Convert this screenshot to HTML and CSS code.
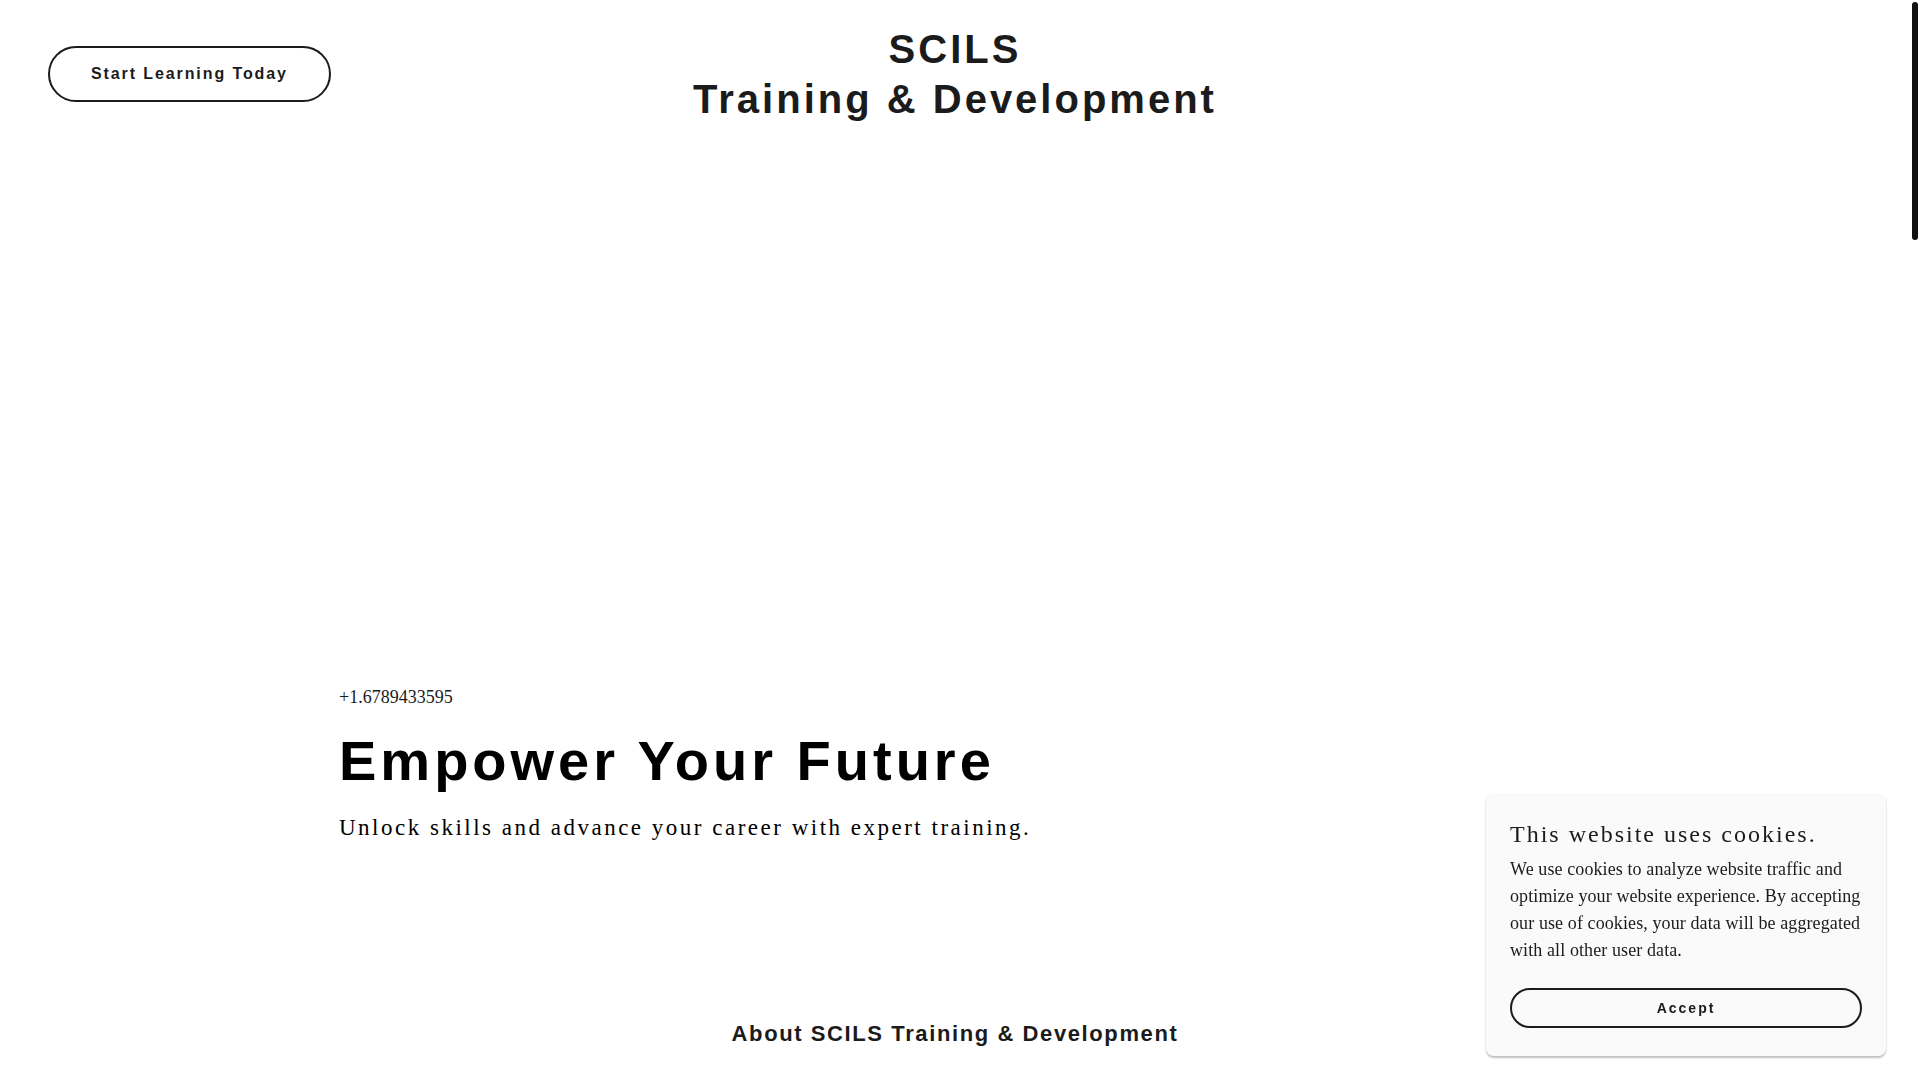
FILE: index.html
```html
<!DOCTYPE html>
<html lang="en">
<head>
    <meta charset="UTF-8">
    <meta name="viewport" content="width=device-width, initial-scale=1.0">
    <title>SCILS Training &amp; Development</title>
    <link rel="stylesheet" href="styles.css">
</head>
<body>
    <header class="site-header">
        <div class="header-left">
            <a class="btn-outline" href="#">Start Learning Today</a>
        </div>
        <h1 class="site-title">SCILS<br>Training &amp; Development</h1>
        <div class="header-right"></div>
    </header>

    <section class="hero">
        <div class="container">
            <div class="hero-phone">+1.6789433595</div>
            <h2 class="hero-title">Empower Your Future</h2>
            <p class="hero-sub">Unlock skills and advance your career with expert training.</p>
        </div>
    </section>

    <section class="about">
        <h3 class="about-title">About SCILS Training &amp; Development</h3>
    </section>

    <!-- cookie notice -->
    <div class="cookie-box">
        <h4 class="cookie-title">This website uses cookies.</h4>
        <p class="cookie-text">We use cookies to analyze website traffic and optimize your website experience. By accepting our use of cookies, your data will be aggregated with all other user data.</p>
        <a class="cookie-accept" href="#">Accept</a>
    </div>

    <div class="scroll-thumb"></div>
</body>
</html>
```

FILE: styles.css
```css
body {
    margin: 0;
    padding: 0 10px 0 0; /* scrollbar gutter */
    background: #fff;
    color: #1b1b1b;
    font-family: "Liberation Sans", Arial, sans-serif;
    overflow: hidden;
}
.site-header {
    display: grid;
    grid-template-columns: 1fr auto 1fr;
    align-items: start;
    padding: 24px 48px 0;
}
.btn-outline {
    display: inline-flex;
    align-items: center;
    justify-content: center;
    box-sizing: border-box;
    height: 56px;
    padding: 0 41px;
    margin-top: 22px;
    border: 2px solid #1b1b1b;
    border-radius: 28px;
    color: #1b1b1b;
    text-decoration: none;
    font-size: 16px;
    font-weight: bold;
    letter-spacing: 1.9px;
}
.site-title {
    margin: 0;
    font-size: 40px;
    line-height: 50px;
    font-weight: bold;
    letter-spacing: 3px;
    text-align: center;
    color: #1b1b1b;
}
.hero {
    padding: 560px 0 0;
}
.container {
    max-width: 1232px;
    margin: 0 auto;
}
.hero-phone {
    font-family: "Liberation Serif", "Times New Roman", serif;
    font-size: 18px;
    line-height: 27px;
    color: #1b1b1b;
}
.hero-title {
    margin: 16px 0 0;
    font-size: 56px;
    line-height: 1.2;
    font-weight: bold;
    letter-spacing: 4px;
    color: #000;
}
.hero-sub {
    margin: 17px 0 0;
    font-family: "Liberation Serif", "Times New Roman", serif;
    font-size: 23px;
    line-height: 33px;
    letter-spacing: 2.5px;
    color: #000;
}
.about {
    padding-top: 177px;
    text-align: center;
}
.about-title {
    margin: 0;
    font-size: 22px;
    line-height: 1.2;
    font-weight: bold;
    letter-spacing: 1.6px;
    color: #1b1b1b;
}
.cookie-box {
    position: fixed;
    right: 34px;
    bottom: 24px;
    width: 400px;
    box-sizing: border-box;
    padding: 28px 24px 28px;
    background: #fafafa;
    border-radius: 8px;
    box-shadow: 0 2px 2px rgba(0, 0, 0, 0.25);
}
.cookie-title {
    margin: 0;
    font-family: "Liberation Serif", "Times New Roman", serif;
    font-size: 24px;
    line-height: 26px;
    font-weight: normal;
    letter-spacing: 2px;
    color: #1b1b1b;
}
.cookie-text {
    margin: 9px 0 0;
    font-family: "Liberation Serif", "Times New Roman", serif;
    font-size: 18px;
    line-height: 27px;
    letter-spacing: 0.1px;
    color: #1b1b1b;
}
.cookie-accept {
    display: flex;
    align-items: center;
    justify-content: center;
    box-sizing: border-box;
    height: 40px;
    margin-top: 24px;
    border: 2px solid #1b1b1b;
    border-radius: 20px;
    color: #1b1b1b;
    text-decoration: none;
    font-size: 14px;
    font-weight: bold;
    letter-spacing: 2px;
}
.scroll-thumb {
    position: fixed;
    top: 2px;
    right: 2px;
    width: 6px;
    height: 238px;
    border-radius: 3px;
    background: #111;
}
```
